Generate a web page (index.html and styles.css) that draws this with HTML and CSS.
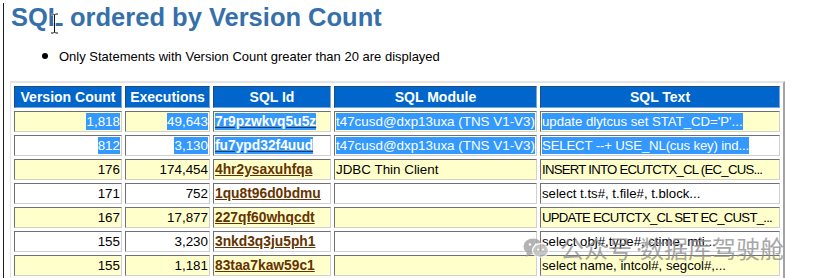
FILE: index.html
```html
<!DOCTYPE html>
<html lang="en">
<head>
<meta charset="utf-8">
<title>SQL ordered by Version Count</title>
<link rel="stylesheet" href="styles.css">
</head>
<body>
<div class="page">
  <h1 class="title">SQL ordered by Version Count</h1>
  <ul class="notes">
    <li>Only Statements with Version Count greater than 20 are displayed</li>
  </ul>
  <table class="awr">
    <thead>
      <tr>
        <th class="c1">Version Count</th>
        <th class="c2">Executions</th>
        <th class="c3">SQL Id</th>
        <th class="c4">SQL Module</th>
        <th class="c5">SQL Text</th>
      </tr>
    </thead>
    <tbody>
      <tr class="hl">
        <td class="num"><span class="sel">1,818</span></td>
        <td class="num"><span class="sel">49,643</span></td>
        <td><a class="sqlid sel" href="#">7r9pzwkvq5u5z</a></td>
        <td><span class="sel">t47cusd@dxp13uxa (TNS V1-V3)</span></td>
        <td class="sqltext"><span class="sel">update dlytcus set STAT_CD='P'...</span></td>
      </tr>
      <tr>
        <td class="num"><span class="sel">812</span></td>
        <td class="num"><span class="sel">3,130</span></td>
        <td><a class="sqlid sel" href="#">fu7ypd32f4uud</a></td>
        <td><span class="sel">t47cusd@dxp13uxa (TNS V1-V3)</span></td>
        <td class="sqltext tight"><span class="sel">SELECT --+ USE_NL(cus key) ind...</span></td>
      </tr>
      <tr class="hl">
        <td class="num">176</td>
        <td class="num">174,454</td>
        <td><a class="sqlid" href="#">4hr2ysaxuhfqa</a></td>
        <td>JDBC Thin Client</td>
        <td class="sqltext caps">INSERT INTO ECUTCTX_CL (EC_CUS...</td>
      </tr>
      <tr>
        <td class="num">171</td>
        <td class="num">752</td>
        <td><a class="sqlid" href="#">1qu8t96d0bdmu</a></td>
        <td></td>
        <td class="sqltext">select t.ts#, t.file#, t.block...</td>
      </tr>
      <tr class="hl">
        <td class="num">167</td>
        <td class="num">17,877</td>
        <td><a class="sqlid" href="#">227qf60whqcdt</a></td>
        <td></td>
        <td class="sqltext caps">UPDATE ECUTCTX_CL SET EC_CUST_...</td>
      </tr>
      <tr>
        <td class="num">155</td>
        <td class="num">3,230</td>
        <td><a class="sqlid" href="#">3nkd3q3ju5ph1</a></td>
        <td></td>
        <td class="sqltext">select obj#,type#, ctime, mti...</td>
      </tr>
      <tr class="hl">
        <td class="num">155</td>
        <td class="num">1,181</td>
        <td><a class="sqlid" href="#">83taa7kaw59c1</a></td>
        <td></td>
        <td class="sqltext">select name, intcol#, segcol#,...</td>
      </tr>
    </tbody>
  </table>

  <div class="watermark">
    <svg class="wm-icon" width="26" height="20" viewBox="0 0 26 20" aria-hidden="true">
      <ellipse cx="10" cy="8.5" rx="9.5" ry="8" fill="#9a9a9a"/>
      <path d="M4 14 L3 19 L8.5 16 Z" fill="#9a9a9a"/>
      <ellipse cx="17.5" cy="12.5" rx="8" ry="6.8" fill="#b4b4b4" stroke="#fff" stroke-width="1.2"/>
      <circle cx="7" cy="6.5" r="1.2" fill="#fff"/>
      <circle cx="13" cy="6.5" r="1.2" fill="#fff"/>
      <circle cx="15" cy="11.5" r="1" fill="#fff"/>
      <circle cx="20" cy="11.5" r="1" fill="#fff"/>
    </svg>
    <span class="wm-text">公众号</span>
    <span class="wm-dot">·</span>
    <span class="wm-text">数据库驾驶舱</span>
  </div>

  <svg class="cursor" width="9" height="21" viewBox="0 0 9 21" aria-hidden="true">
    <path d="M1 1 H3.5 L4.5 2 L5.5 1 H8 M4.5 2 V19 M1 20 H3.5 L4.5 19 L5.5 20 H8" fill="none" stroke="#fff" stroke-width="2.4"/>
    <path d="M1 1 H3.5 L4.5 2 L5.5 1 H8 M4.5 2 V19 M1 20 H3.5 L4.5 19 L5.5 20 H8" fill="none" stroke="#111" stroke-width="1"/>
  </svg>
</div>
</body>
</html>
```

FILE: styles.css
```css
html, body {
  margin: 0;
  padding: 0;
  background: #ffffff;
  overflow: hidden;
}

.page {
  position: relative;
  margin-left: 3px;
  border-left: 1px solid #1c1c1c;
  min-height: 100vh;
  font-family: "Liberation Sans", Arial, sans-serif;
  color: #000;
}

.title {
  margin: 3px 0 0 0;
  padding-left: 7px;
  font-size: 25.5px;
  line-height: 29px;
  font-weight: bold;
  color: #3670aa;
}

.notes {
  margin: 17px 0 0 0;
  padding-left: 38px;
  font-size: 13px;
  line-height: 15px;
  list-style: none;
}

.notes li {
  display: flex;
  align-items: center;
}

.notes li::before {
  content: "";
  flex: none;
  width: 6px;
  height: 6px;
  border-radius: 50%;
  background: #000;
  margin-right: 11px;
  margin-top: -2px;
}

.awr {
  margin: 17px 0 0 6px;
  border-collapse: separate;
  border-spacing: 3px;
  border-style: solid;
  border-width: 2px 2px 2px 1px;
  border-color: #e4e4e4 #a3a3a3 #a3a3a3 #e4e4e4;
  table-layout: fixed;
  width: 773px;
  font-size: 13.4px;
}

.awr th {
  box-sizing: border-box;
  height: 22px;
  padding: 0 2px;
  background: #0066cc;
  color: #ffffff;
  font-size: 14px;
  font-weight: bold;
  text-align: center;
  border: 1px solid;
  border-color: #1d4c80 #7aa6d6 #7aa6d6 #1d4c80;
  white-space: nowrap;
}

.awr .c1 { width: 108px; }
.awr .c2 { width: 85px; }
.awr .c3 { width: 118px; }
.awr .c4 { width: 203px; }
.awr .c5 { width: 240px; }

.awr td {
  box-sizing: border-box;
  height: 21px;
  padding: 0 1px;
  border: 1px solid;
  border-color: #707070 #d0d0d0 #d0d0d0 #707070;
  background: #ffffff;
  white-space: nowrap;
  overflow: hidden;
  vertical-align: middle;
}

.awr tr.hl td {
  background: #ffffcc;
}

.awr td.num {
  text-align: right;
}

.awr td.sqltext {
  font-size: 13.2px;
}

.awr td.tight {
  letter-spacing: -0.15px;
}

.awr td.caps {
  letter-spacing: -0.75px;
}

.sqlid {
  color: #663300;
  font-weight: bold;
  font-size: 13.8px;
  text-decoration: underline;
}

.sel {
  background: #3399ff;
  color: #ffffff;
  padding: 1px 0;
}

a.sel {
  color: #ffffff;
  text-decoration-color: #2b3a55;
}

.watermark {
  position: absolute;
  left: 519px;
  top: 233px;
  display: flex;
  align-items: center;
  opacity: 0.75;
  pointer-events: none;
}

.wm-icon {
  margin-right: 11px;
}

.wm-text {
  font-family: "Noto Sans CJK SC", "Noto Sans", sans-serif;
  font-size: 24px;
  line-height: 24px;
  color: #8a8a8a;
}

.wm-dot {
  font-family: "Noto Sans CJK SC", sans-serif;
  font-size: 14px;
  color: #8a8a8a;
  width: 8px;
  text-align: center;
}

.cursor {
  position: absolute;
  left: 46px;
  top: 10px;
  pointer-events: none;
}
```
